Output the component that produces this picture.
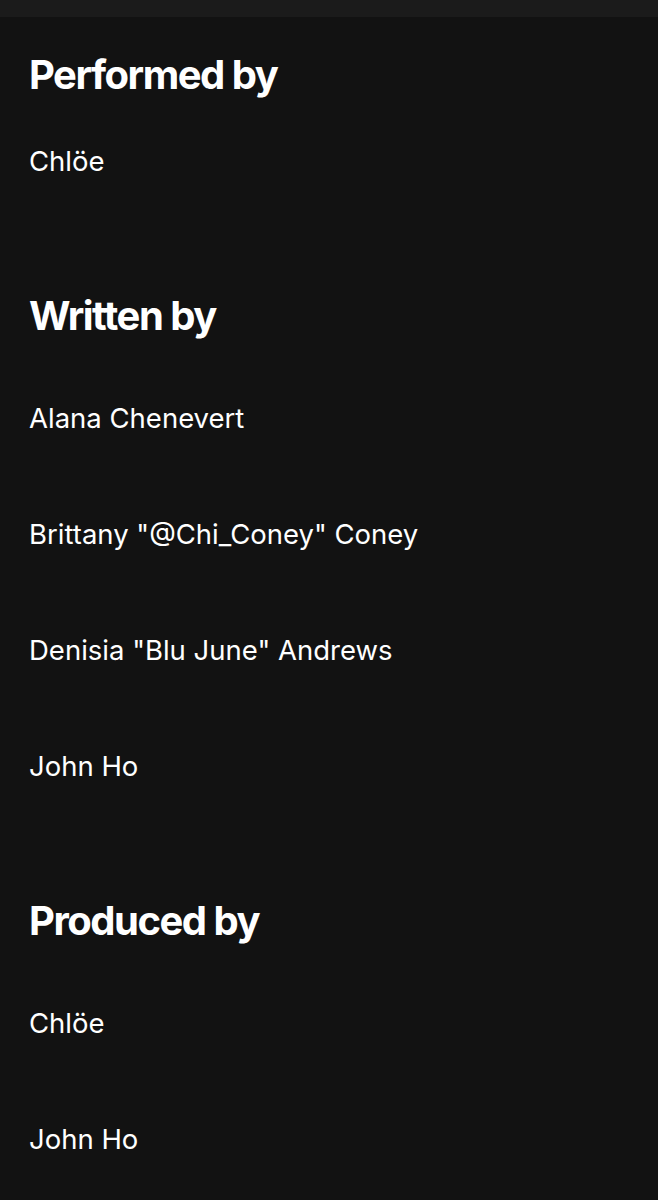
const sections = [
  { title: "Performed by", names: ["Chlöe"] },
  {
    title: "Written by",
    names: [
      "Alana Chenevert",
      'Brittany "@Chi_Coney" Coney',
      'Denisia "Blu June" Andrews',
      "John Ho",
    ],
  },
  { title: "Produced by", names: ["Chlöe", "John Ho"] },
];

export default function App() {
  return (
    <div
      className="h-[1200px] w-full overflow-hidden bg-[#121212] text-white"
      style={{ fontFamily: "Inter, 'Noto Sans', sans-serif" }}
    >
      <div className="h-[17px] bg-[#1b1b1b]" />
      <div className="px-[29px] pt-[34px]">
        {sections.map((s, si) => (
          <section key={s.title} className="mb-[40px]">
            <h2 className="text-[40px] font-bold leading-[48px] tracking-[-1.5px]">
              {s.title}
            </h2>
            <ul className={si === 0 ? "mt-[37px]" : "mt-[53px]"}>
              {s.names.map((n, i) => (
                <li key={i} className="h-[116px] text-[27.5px] leading-[50px]">
                  {n}
                </li>
              ))}
            </ul>
          </section>
        ))}
      </div>
    </div>
  );
}
